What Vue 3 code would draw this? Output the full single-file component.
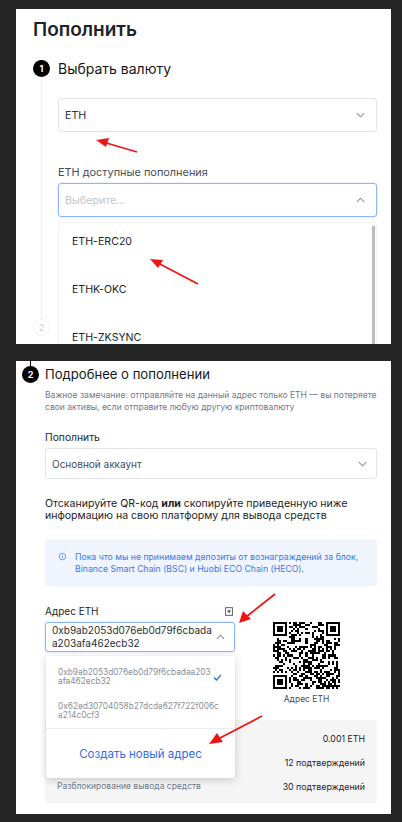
<template>
  <div class="page">
    <section class="panel first">
      <h1>Пополнить</h1>
      <div class="step-head">
        <span class="badge">1</span>
        <span class="step-title">Выбрать валюту</span>
      </div>
      <div class="step-body">
        <div class="select coin">
          <span>ETH</span>
          <svg class="chev" viewBox="0 0 10 6"><path d="M1 1l4 4 4-4" /></svg>
        </div>
        <div class="label net-label">ETH доступные пополнения</div>
        <div class="select focused">
          <span class="placeholder">Выберите...</span>
          <svg class="chev" viewBox="0 0 10 6"><path d="M1 5l4-4 4 4" /></svg>
        </div>
        <div class="net-menu">
          <div v-for="net in networks" :key="net" class="net-item">{{ net }}</div>
          <div class="scrollbar"></div>
        </div>
      </div>
      <span class="badge ghost">2</span>
      <svg class="arrow" viewBox="0 0 402 344">
        <path d="M137 152L103 142" />
        <path class="head" d="M96 140l13-2-3 9z" />
        <path d="M198 284L158 263" />
        <path class="head" d="M150 259l13 1-5 8z" />
      </svg>
    </section>

    <section class="panel second">
      <div class="connector"></div>
      <div class="step-head two">
        <span class="badge">2</span>
        <span class="step-title">Подробнее о пополнении</span>
      </div>
      <div class="content">
        <p class="note">
          Важное замечание: отправляйте на данный адрес только ETH — вы потеряете свои активы, если отправите любую другую криптовалюту
        </p>
        <div class="label acc-label">Пополнить</div>
        <div class="select account">
          <span>Основной аккаунт</span>
          <svg class="chev" viewBox="0 0 10 6"><path d="M1 1l4 4 4-4" /></svg>
        </div>
        <p class="scan">
          Отсканируйте QR-код <b>или</b> скопируйте приведенную ниже информацию на свою платформу для вывода средств
        </p>
        <div class="info">
          <svg class="info-icon" viewBox="0 0 10 10">
            <circle cx="5" cy="5" r="3.6" />
            <path d="M5 4.4v2.6M5 2.9v.7" />
          </svg>
          <span>Пока что мы не принимаем депозиты от вознаграждений за блок, Binance Smart Chain (BSC) и Huobi ECO Chain (HECO).</span>
        </div>
        <div class="address-row">
          <div class="address-col">
            <div class="address-label">
              <span>Адрес ETH</span>
              <svg class="book" viewBox="0 0 9 10">
                <rect x="0.7" y="0.7" width="7.6" height="8.6" />
                <path d="M3 3.5h3v2.5h-3z" class="fill" />
              </svg>
            </div>
            <div class="address-select">
              <span>0xb9ab2053d076eb0d79f6cbadaa203afa462ecb32</span>
              <svg class="chev" viewBox="0 0 10 6"><path d="M1 5l4-4 4 4" /></svg>
            </div>
          </div>
          <div class="qr-col">
            <svg class="qr" viewBox="0 0 33 33" shape-rendering="crispEdges">
              <rect
                v-for="cell in qrCells"
                :key="cell.key"
                :x="cell.x"
                :y="cell.y"
                width="1"
                height="1"
              />
            </svg>
            <span>Адрес ETH</span>
          </div>
        </div>
        <div class="limits">
          <div v-for="row in limits" :key="row.value" class="limit-row">
            <span class="limit-name">{{ row.name }}</span>
            <span class="limit-value">{{ row.value }}</span>
          </div>
        </div>
        <div class="address-menu">
          <div class="address-item selected">
            <span>0xb9ab2053d076eb0d79f6cbadaa203afa462ecb32</span>
            <svg class="check" viewBox="0 0 10 8"><path d="M1 4l2.8 2.8L9 1" /></svg>
          </div>
          <div class="address-item">
            <span>0x62ed30704058b27dcda627f722f006ca214c0cf3</span>
          </div>
          <div class="create">Создать новый адрес</div>
        </div>
      </div>
      <svg class="arrow" viewBox="0 0 402 461">
        <path d="M275 233L246 256" />
        <path class="head" d="M239 262l4-12 8 8z" />
        <path d="M262 355L220 377" />
        <path class="head" d="M209 383l8-11 6 9z" />
      </svg>
    </section>
  </div>
</template>

<script setup>
// the two rows hidden behind the address menu keep empty names
const networks = ['ETH-ERC20', 'ETHK-OKC', 'ETH-ZKSYNC']

const limits = [
  { name: '', value: '0.001 ETH' },
  { name: '', value: '12 подтверждений' },
  { name: 'Разблокирование вывода средств', value: '30 подтверждений' },
]

// stand-in QR: fixed finder squares, the rest from a small seeded generator
const size = 33
let seed = 20240

function next() {
  seed = (seed * 1103515245 + 12345) % 2147483648
  return seed / 2147483648
}

function finder(x, y) {
  if (x > 6 || y > 6 || x < 0 || y < 0) return false
  const ring = x === 0 || y === 0 || x === 6 || y === 6
  const core = x >= 2 && x <= 4 && y >= 2 && y <= 4
  return ring || core
}

function inFinderZone(x, y) {
  return (x < 8 && y < 8) || (x >= size - 8 && y < 8) || (x < 8 && y >= size - 8)
}

const qrCells = []
for (let y = 0; y < size; y++) {
  for (let x = 0; x < size; x++) {
    let on
    if (inFinderZone(x, y)) {
      on = finder(x, y) || finder(x - (size - 7), y) || finder(x, y - (size - 7))
    } else {
      on = next() > 0.5
    }
    if (on) qrCells.push({ key: x + '-' + y, x, y })
  }
}
</script>

<style>
html,
body {
  margin: 0;
  background: #252525;
}
</style>

<style scoped>
.page {
  width: 402px;
  height: 822px;
  box-sizing: border-box;
  padding: 9px 11px 8px 16px;
  display: flex;
  flex-direction: column;
  gap: 17px;
  background: #252525;
  font-family: Inter, "Noto Sans", sans-serif;
  color: #1e2329;
  overflow: hidden;
}

.panel {
  position: relative;
  background: #fff;
  overflow: hidden;
}

.first {
  height: 335px;
  flex: none;
  padding: 7px 14px 0 17px;
  box-sizing: border-box;
}

.second {
  flex: 1;
  padding: 0 14px 0 6px;
}

h1 {
  margin: 0;
  font-size: 19px;
  line-height: 28px;
  font-weight: 600;
  color: #1e2329;
}

.step-head {
  display: flex;
  align-items: center;
  gap: 8px;
  margin-top: 15px;
  height: 18px;
}

.step-head.two {
  margin-top: 4px;
  gap: 6px;
}

.badge {
  width: 17px;
  height: 17px;
  flex: none;
  border-radius: 50%;
  background: #000;
  color: #fff;
  font-size: 9px;
  font-weight: 700;
  display: flex;
  align-items: center;
  justify-content: center;
}

.step-title {
  font-size: 14px;
  font-weight: 400;
  color: #14171a;
}

.second .step-title {
  font-size: 13.1px;
}

.step-body {
  box-sizing: border-box;
  margin-left: 8px;
  padding-left: 16px;
  margin-top: 3px;
  padding-top: 18px;
  border-left: 1px dotted #ddd;
  height: 239px;
}

.select {
  height: 34px;
  box-sizing: border-box;
  border: 1px solid #e3e5e8;
  border-radius: 3px;
  display: flex;
  align-items: center;
  justify-content: space-between;
  padding: 0 11px 0 6px;
  font-size: 10.7px;
  color: #2b2f36;
}

.chev {
  width: 9px;
  height: 6px;
  flex: none;
}

.chev path {
  fill: none;
  stroke: #8a9099;
  stroke-width: 1.2;
}

.label {
  font-size: 10.9px;
  color: #474d57;
}

.net-label {
  margin-top: 33px;
  line-height: 14px;
  margin-bottom: 4px;
}

.focused {
  border-color: #8fb4ff;
  box-shadow: 0 0 2px #b9d0ff;
}

.placeholder {
  color: #c2c6cc;
}

.net-menu {
  position: relative;
  margin-top: 5px;
  padding-left: 13px;
  border: 1px solid #f3f4f5;
  border-radius: 3px;
  font-size: 10.6px;
  color: #1e2329;
  height: 130px;
}

.net-item {
  height: 48px;
  line-height: 38px;
}

.scrollbar {
  position: absolute;
  top: 3px;
  right: 1px;
  width: 3px;
  bottom: 0;
  background: #bdbdbd;
}

.badge.ghost {
  position: absolute;
  left: 17px;
  top: 310px;
  background: #fff;
  color: #c9cdd2;
  border: 1px solid #eff0f2;
  box-sizing: border-box;
  font-weight: 400;
}

.arrow {
  position: absolute;
  left: -16px;
  top: -9px;
  width: 402px;
  height: 344px;
  pointer-events: none;
  overflow: visible;
}

.second .arrow {
  height: 461px;
  top: 0;
}

.arrow path {
  fill: none;
  stroke: #f01414;
  stroke-width: 1.8;
}

.arrow .head {
  fill: #f01414;
  stroke: none;
}

.connector {
  position: absolute;
  left: 14px;
  top: 0;
  width: 1px;
  height: 6px;
  background: #000;
}

.content {
  position: relative;
  padding-left: 23px;
}

.note {
  margin: 6px 0 0;
  font-size: 8.55px;
  line-height: 12px;
  color: #707a8a;
}

.acc-label {
  margin-top: 17px;
  font-size: 10.3px;
  line-height: 14px;
  color: #1e2329;
}

.account {
  height: 31px;
  margin-top: 4px;
  font-size: 10px;
  padding: 0 9px 0 6px;
  color: #474d57;
}

.scan {
  margin: 19px 0 0;
  font-size: 10.55px;
  line-height: 12px;
  color: #1e2329;
}

.scan b {
  font-weight: 700;
}

.info {
  margin-top: 17px;
  height: 47px;
  box-sizing: border-box;
  background: #f0f4fd;
  border-radius: 3px;
  display: flex;
  gap: 8px;
  padding: 12px 6px 0 13px;
  font-size: 8.7px;
  line-height: 12px;
  color: #3b78f0;
}

.info-icon {
  width: 9px;
  height: 9px;
  flex: none;
  margin-top: 1px;
}

.info-icon circle,
.info-icon path {
  fill: none;
  stroke: #3b78f0;
  stroke-width: 0.8;
}

.address-row {
  display: flex;
  gap: 38px;
  margin-top: 18px;
  height: 108px;
}

.address-col {
  width: 190px;
  flex: none;
}

.address-label {
  display: flex;
  justify-content: space-between;
  align-items: center;
  font-size: 10px;
  line-height: 14px;
  color: #1e2329;
  padding-right: 2px;
}

.book {
  width: 8px;
  height: 9px;
}

.book rect {
  fill: none;
  stroke: #474d57;
  stroke-width: 1;
}

.book .fill {
  fill: #474d57;
}

.address-select {
  margin-top: 4px;
  height: 30px;
  box-sizing: border-box;
  border: 1px solid #8fb4ff;
  box-shadow: 0 0 2px #b9d0ff;
  border-radius: 3px;
  display: flex;
  align-items: center;
  padding: 0 9px 0 6px;
  gap: 3px;
  font-size: 10px;
  line-height: 13.5px;
  color: #2b2f36;
  word-break: break-all;
}

.qr-col {
  display: flex;
  flex-direction: column;
  align-items: center;
  padding-top: 18px;
  gap: 5px;
  font-size: 8.5px;
  color: #474d57;
}

.qr {
  width: 67px;
  height: 67px;
}

.limits {
  margin-top: 8px;
  height: 83px;
  box-sizing: border-box;
  background: #f5f5f5;
  border-radius: 3px;
  padding: 11px 12px;
  display: flex;
  flex-direction: column;
  gap: 9px;
  font-size: 8.8px;
  color: #1e2329;
}

.limit-row {
  display: flex;
  justify-content: space-between;
  line-height: 15px;
}

.limit-name {
  color: #707a8a;
  font-size: 8.5px;
}

/* dropdown sits over the limits block */
.address-menu {
  position: absolute;
  left: 24px;
  top: 267px;
  width: 189px;
  height: 122px;
  background: #fff;
  border-radius: 3px;
  box-shadow: 0 2px 8px rgba(0, 0, 0, 0.18);
  display: flex;
  flex-direction: column;
}

.address-item {
  display: flex;
  align-items: center;
  gap: 1px;
  padding: 0 13px 0 12px;
  height: 34px;
  flex: none;
  font-size: 8.3px;
  line-height: 9px;
  color: #8a8f98;
  word-break: break-all;
}

.address-item.selected {
  margin-top: 4px;
}

.check {
  width: 9px;
  height: 7px;
  flex: none;
}

.check path {
  fill: none;
  stroke: #2070f5;
  stroke-width: 1.5;
}

.create {
  border-top: 1px solid #eaecef;
  flex: 1;
  display: flex;
  align-items: center;
  justify-content: center;
  font-size: 11.5px;
  color: #2f6bf0;
}
</style>
